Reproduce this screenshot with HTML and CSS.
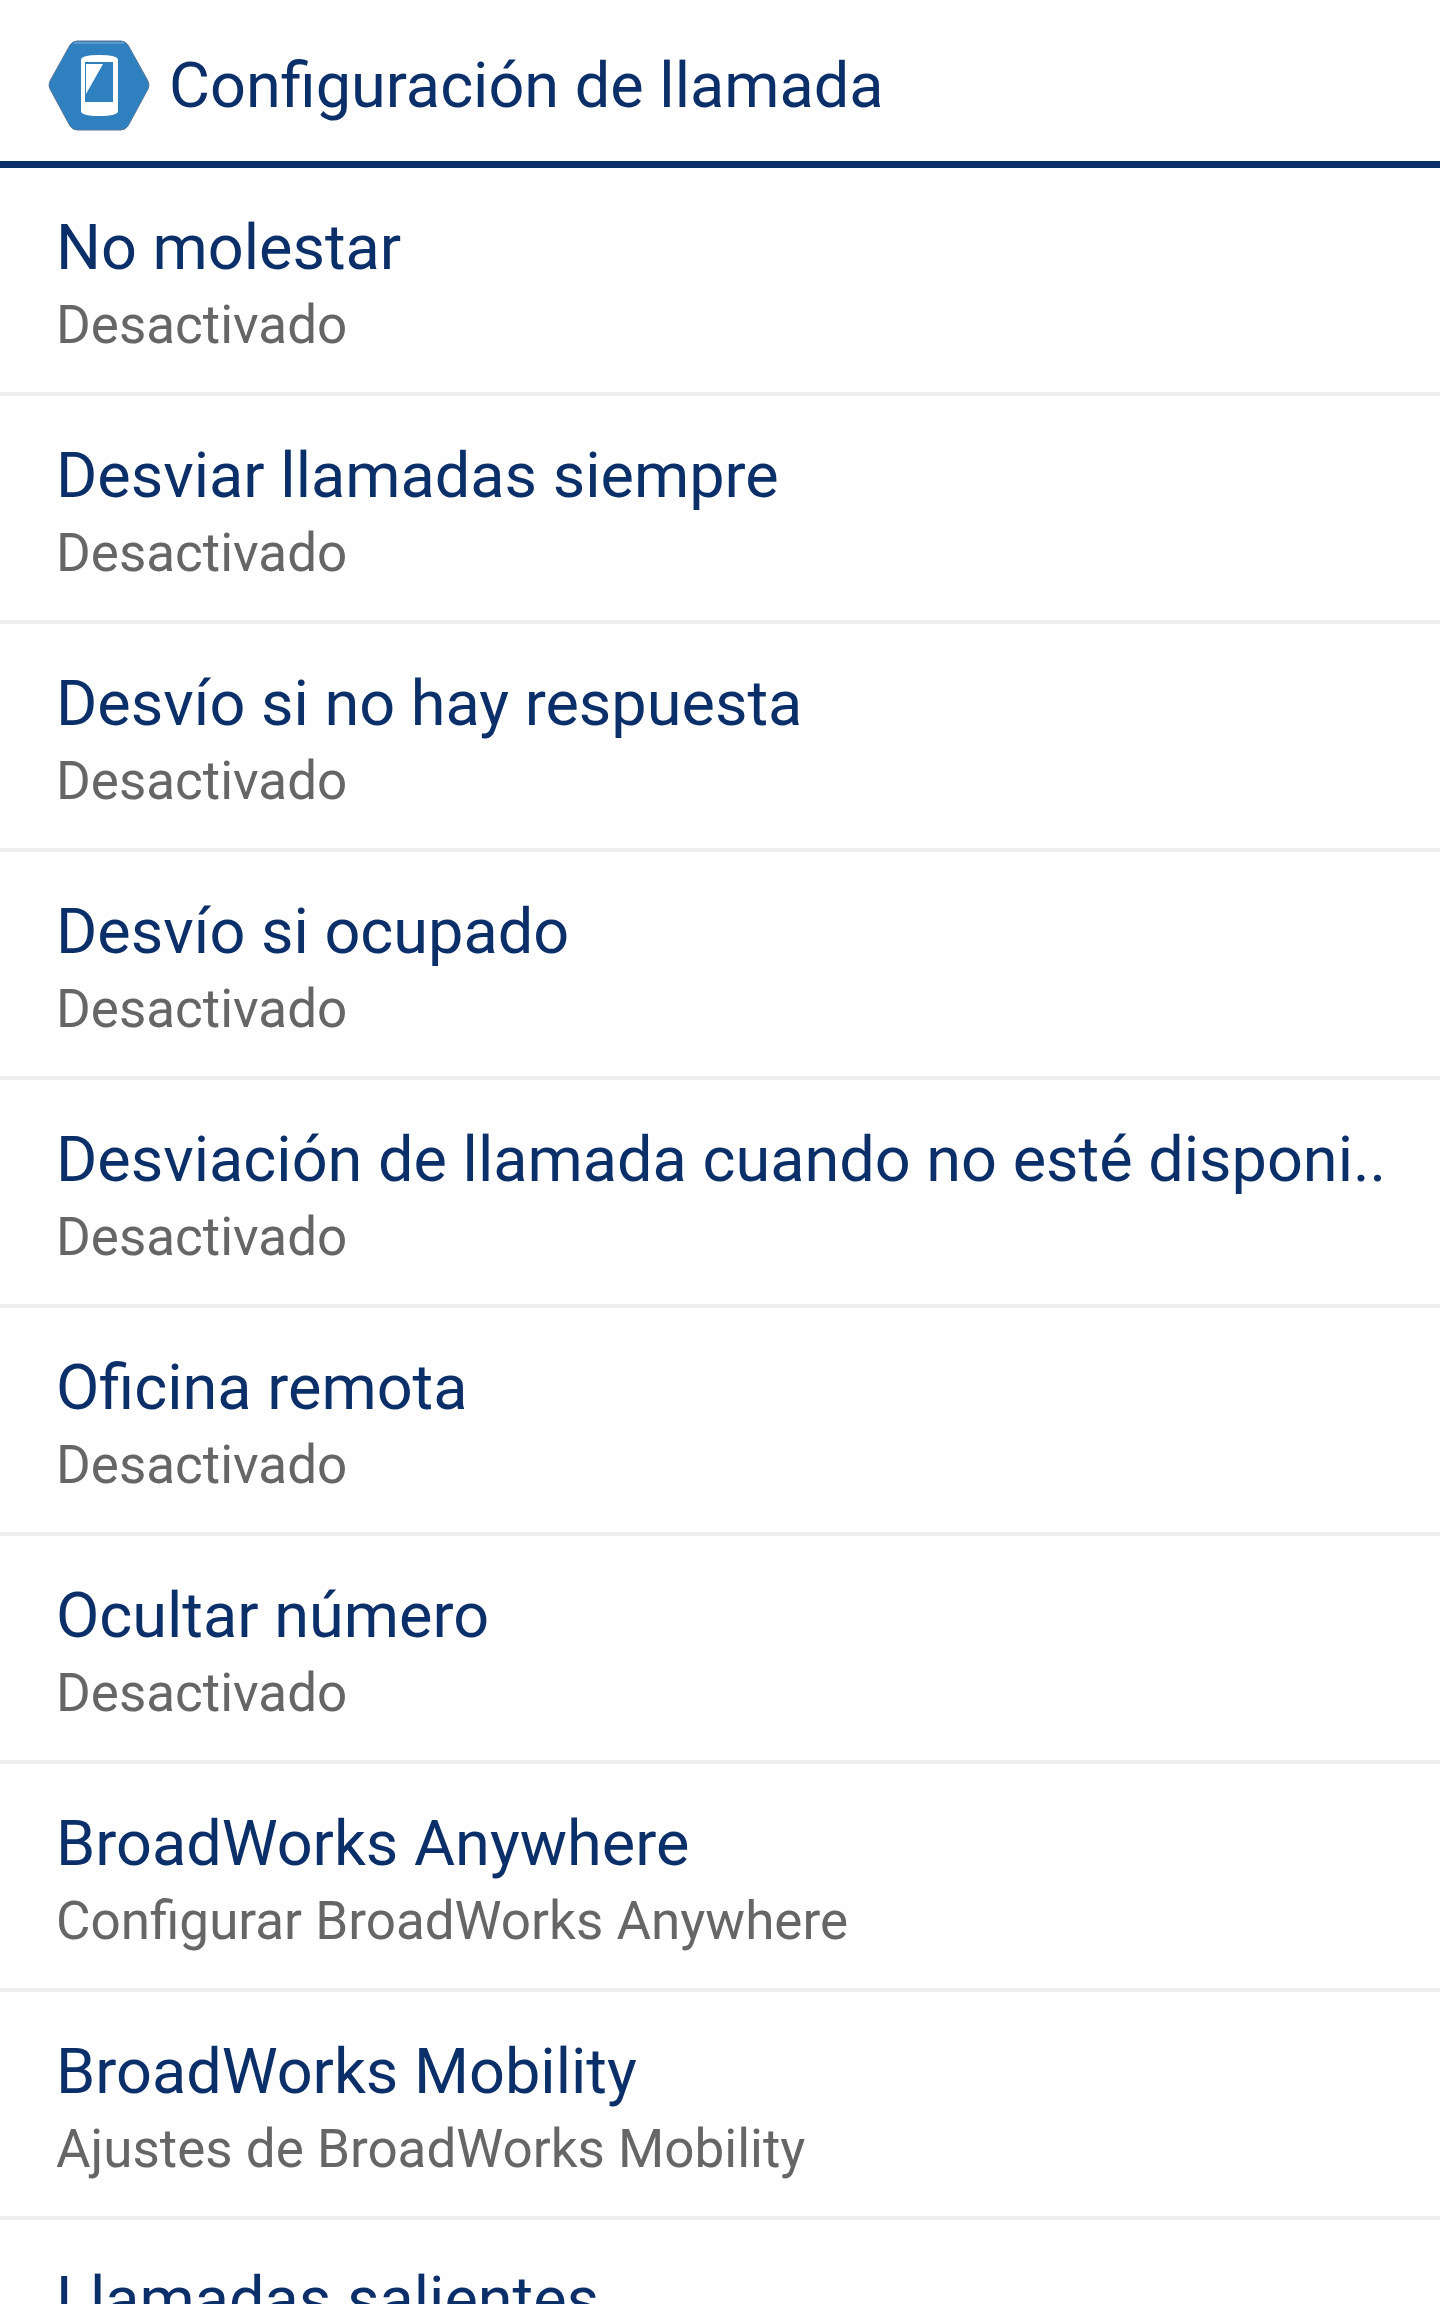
FILE: index.html
```html
<!DOCTYPE html>
<html lang="es">
<head>
    <meta charset="UTF-8">
    <title>Configuración de llamada</title>
    <link rel="stylesheet" href="styles.css">
</head>
<body>
    <header class="header">
        <svg class="header-icon" viewBox="0 0 102 91" aria-hidden="true">
            <path d="M29 1H73Q77 1 80 5L100 41Q102 45 100 49L80 86Q77 90 73 90H29Q25 90 22 86L2 49Q0 45 2 41L22 5Q25 1 29 1Z" fill="#2f80be" stroke="#56779a"/>
            <path d="M26 3H76" stroke="#6ba3d0" stroke-width="1.5"/>
            <path d="M33 20Q33 15 51 15Q70 15 70 20V71Q70 76 51 76Q33 76 33 71Z" fill="#fff"/>
            <path d="M37 22H65V62H37Z" fill="#2f80be"/>
            <path d="M38 24H55L38 54Z" fill="#fff"/>
        </svg>
        <h1 class="header-title">Configuración de llamada</h1>
    </header>

    <ul class="settings">
        <li><a class="setting" href="#"><span class="name">No molestar</span><span class="status">Desactivado</span></a></li>
        <li><a class="setting" href="#"><span class="name">Desviar llamadas siempre</span><span class="status">Desactivado</span></a></li>
        <li><a class="setting" href="#"><span class="name">Desvío si no hay respuesta</span><span class="status">Desactivado</span></a></li>
        <li><a class="setting" href="#"><span class="name">Desvío si ocupado</span><span class="status">Desactivado</span></a></li>
        <li><a class="setting" href="#"><span class="name">Desviación de llamada cuando no esté disponi..</span><span class="status">Desactivado</span></a></li>
        <li><a class="setting" href="#"><span class="name">Oficina remota</span><span class="status">Desactivado</span></a></li>
        <li><a class="setting" href="#"><span class="name">Ocultar número</span><span class="status">Desactivado</span></a></li>
        <li><a class="setting" href="#"><span class="name">BroadWorks Anywhere</span><span class="status">Configurar BroadWorks Anywhere</span></a></li>
        <li><a class="setting" href="#"><span class="name">BroadWorks Mobility</span><span class="status">Ajustes de BroadWorks Mobility</span></a></li>
        <li><a class="setting" href="#"><span class="name">Llamadas salientes</span></a></li>
    </ul>
</body>
</html>
```
FILE: styles.css
```css
body {
    font-family: Roboto, sans-serif;
    background-color: #fefefe;
    color: #0b2f69;
    margin: 0;
    height: 100vh;
    display: flex;
    flex-direction: column;
    overflow: hidden;
}

.header {
    display: flex;
    align-items: center;
    gap: 19px;
    padding: 40px 48px 30px;
    border-bottom: 7px solid #0b2f69;
}

.header-icon {
    width: 102px;
    height: 91px;
    flex-shrink: 0;
}

.header-title {
    margin: 0;
    font-size: 63px;
    font-weight: 400;
    line-height: 81px;
}

.settings {
    list-style: none;
    margin: 0;
    padding: 0;
    flex: 1;
    min-height: 0;
    overflow: hidden;
}

.setting {
    display: block;
    padding: 40px 56px 30px;
    border-bottom: 4px solid #eeeeee;
    color: #0b2f69;
    text-decoration: none;
}

.name,
.status {
    display: block;
    white-space: nowrap;
}

.name {
    font-size: 63px;
    line-height: 80px;
}

.status {
    font-size: 53px;
    line-height: 74px;
    color: #666666;
}
```
